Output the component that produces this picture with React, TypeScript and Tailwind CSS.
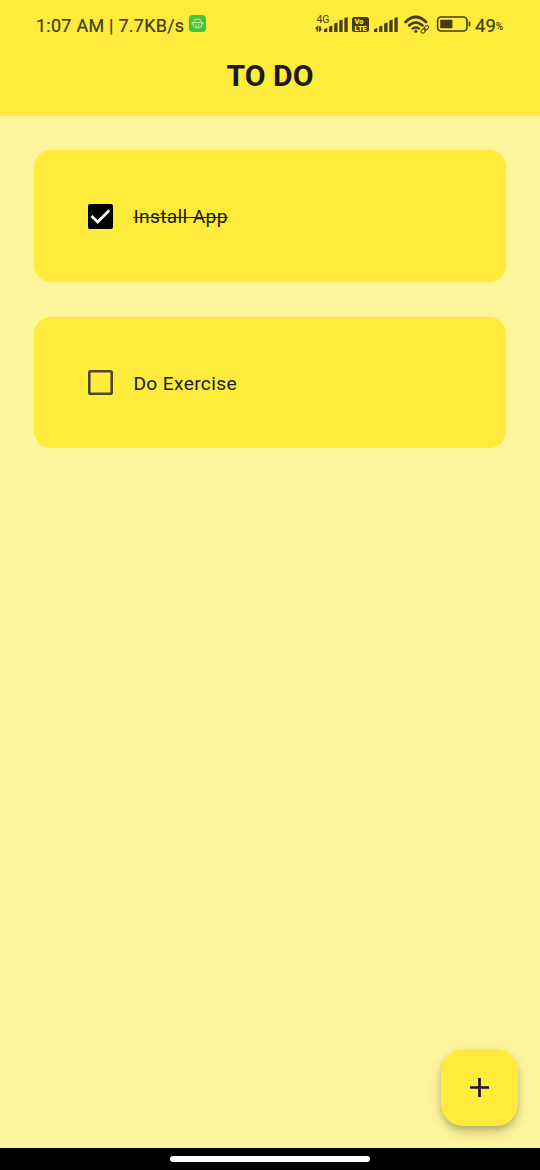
import { useState } from "react";

function SignalBars() {
  return (
    <g fill="#443e10">
      <path d="M0 12.2 3.3 11V15H0Z" />
      <path d="M5.1 9.6 8.4 8.4V15H5.1Z" />
      <path d="M10.2 6.6 13.5 5.4V15H10.2Z" />
      <path d="M15.3 3.6 18.6 2.4V15H15.3Z" />
      <path d="M20.4 1.1 23.7 0V15H20.4Z" />
    </g>
  );
}

function MobileData() {
  return (
    <svg width="34" height="20" viewBox="0 0 34 20" className="shrink-0">
      <text x="1.4" y="10" fontSize="10.5" fontFamily="Roboto, sans-serif" fill="#443e10">
        4G
      </text>
      <path d="M2.4 12.8 0 15.8H1.5V18.4H3.3V12.8ZM4.9 18.8 7.3 15.8H5.8V13.2H4V18.8Z" fill="#443e10" />
      <g transform="translate(9 4)">
        <SignalBars />
      </g>
    </svg>
  );
}

function Volte() {
  return (
    <svg width="17" height="15" viewBox="0 0 17 15" className="ml-[3px] mt-[17px] shrink-0">
      <rect width="17" height="15" rx="2.5" fill="#443e10" />
      <g fontFamily="Roboto, sans-serif" fontWeight="900" fontSize="6.4" fill="#ffeb3b">
        <text x="2.5" y="6.5" textLength="9" lengthAdjust="spacingAndGlyphs">Vo</text>
        <text x="2.6" y="13.5" textLength="12.2" lengthAdjust="spacingAndGlyphs">LTE</text>
      </g>
    </svg>
  );
}

function Wifi() {
  return (
    <svg width="26" height="20" viewBox="0 0 26 20" className="ml-[6px] mt-[15px] shrink-0" fill="none" stroke="#443e10">
      <path d="M1.6 6.9Q11.8 -2.9 22 6.9" strokeWidth="2.8" strokeLinecap="round" />
      <path d="M5.1 10.4Q11.8 4.2 18.5 10.4" strokeWidth="2.7" strokeLinecap="round" />
      <path d="M8.6 13.6Q11.8 11.2 15 13.6" strokeWidth="2.4" strokeLinecap="round" />
      <circle cx="11.8" cy="16.3" r="1.5" fill="#443e10" stroke="none" />
      <g transform="rotate(-45 20.8 14.4)" strokeWidth="1">
        <rect x="16.2" y="12.7" width="5.2" height="3.4" rx="1.7" />
        <rect x="20.2" y="12.7" width="5.2" height="3.4" rx="1.7" />
      </g>
    </svg>
  );
}

function Battery() {
  return (
    <svg width="35" height="16" viewBox="0 0 35 16" className="ml-[6px] mt-[16px] shrink-0">
      <rect x="1.6" y="1" width="29.4" height="14" rx="3.5" fill="none" stroke="#443e10" strokeWidth="1.6" />
      <rect x="4.2" y="3.8" width="12.2" height="8.4" rx="0.7" fill="#443e10" />
      <path d="M32.7 5.5H33.6Q34.4 5.7 34.4 6.5V9.5Q34.4 10.3 33.6 10.5H32.7Z" fill="#443e10" />
    </svg>
  );
}

function StatusBar() {
  return (
    <div className="flex h-12 items-start pl-9 text-[#443e10]">
      <span className="mt-[14px] w-[153px] whitespace-nowrap pt-[0.5px] text-[18px] leading-[22px] tracking-[0.25px] [-webkit-text-stroke:0.2px_#443e10]">
        1:07 AM | 7.7KB/s
      </span>
      <svg width="17" height="17" viewBox="0 0 17 17" className="mt-[15px] shrink-0" fill="none">
        <rect width="17" height="17" rx="4" fill="#4abf3c" />
        <g stroke="#c9f0ae" strokeWidth="1" strokeLinecap="round">
          <path d="M4.2 7.4H12.8V9.4Q12.8 13 8.5 13T4.2 9.4Z M4.5 6.2Q5 4.3 7.2 4.2H9.8Q12 4.3 12.5 6.2" />
          <path d="M6.8 9.2H7M10 9.2H10.2M7 11Q8.5 11.7 10 11M3.2 7.8V9M13.8 7.8V9" />
        </g>
      </svg>
      <div className="ml-[109px] mt-[13px]">
        <MobileData />
      </div>
      <Volte />
      <svg width="24" height="15" viewBox="0 0 24 15" className="ml-[5px] mt-[17px] shrink-0">
        <SignalBars />
      </svg>
      <Wifi />
      <Battery />
      <span className="ml-[4px] mt-[14px] pt-[0.5px] text-[18.5px] leading-[22px] [-webkit-text-stroke:0.2px_#443e10]">49</span>
      <span className="mt-[21px] text-[10px] font-medium leading-3">%</span>
    </div>
  );
}

function Task({ label, initial }: { label: string; initial: boolean }) {
  const [done, setDone] = useState(initial);
  return (
    <li className="flex h-[131.5px] items-center rounded-[16.5px] bg-[#ffeb3b] pl-[53.5px]">
      <button
        type="button"
        role="checkbox"
        aria-checked={done}
        aria-label={label}
        onClick={() => setDone(!done)}
        className="mr-[20.5px]"
      >
        <svg width="25" height="25" viewBox="0 0 25 25" fill="none" className="block">
          {done ? (
            <>
              <rect width="25" height="25" rx="2" fill="#000" />
              <path d="M3.5 12.1 9.7 18 21.3 6.3" stroke="#fff" strokeWidth="2.7" />
            </>
          ) : (
            <rect x="1.3" y="1.3" width="22.4" height="22.4" rx="1.3" stroke="#4d482d" strokeWidth="2.6" />
          )}
        </svg>
      </button>
      <span
        className={
          "pt-[2.5px] text-[19.2px] leading-[28px] tracking-[0.35px] text-[#1d1b16] decoration-[1.2px]" +
          (done ? " line-through" : "")
        }
      >
        {label}
      </span>
    </li>
  );
}

export default function App() {
  return (
    <div className="flex h-[1170px] w-[540px] flex-col bg-[#fff59d] font-[Roboto,sans-serif]">
      <header className="h-[116px] shrink-0 bg-[#ffeb3b]">
        <StatusBar />
        <h1 className="mt-[10px] text-center text-[30.2px] font-bold leading-9 text-[#1d1b16]">TO DO</h1>
      </header>
      <main className="flex grow flex-col justify-between">
        <ul className="flex flex-col gap-[35px] px-[34.4px] pt-[34.4px]">
          <Task label="Install App" initial={true} />
          <Task label="Do Exercise" initial={false} />
        </ul>
        <button
          type="button"
          aria-label="Add task"
          className="mb-[22px] mr-[22px] flex size-[77px] items-center justify-center self-end rounded-[22px] bg-[#ffeb3b] shadow-[0_4px_7px_-1px_rgba(0,0,0,0.22),0_8px_14px_rgba(0,0,0,0.1),0_1px_18px_rgba(0,0,0,0.04)]"
        >
          <svg width="21" height="21" viewBox="0 0 21 21" className="block">
            <path d="M10.5 1V20M1 10.5H20" stroke="#2a0845" strokeWidth="2.7" />
          </svg>
        </button>
      </main>
      <footer className="flex h-[22px] shrink-0 justify-center bg-black pt-[8px]">
        <div className="h-[6px] w-[200px] rounded-full bg-white" />
      </footer>
    </div>
  );
}
